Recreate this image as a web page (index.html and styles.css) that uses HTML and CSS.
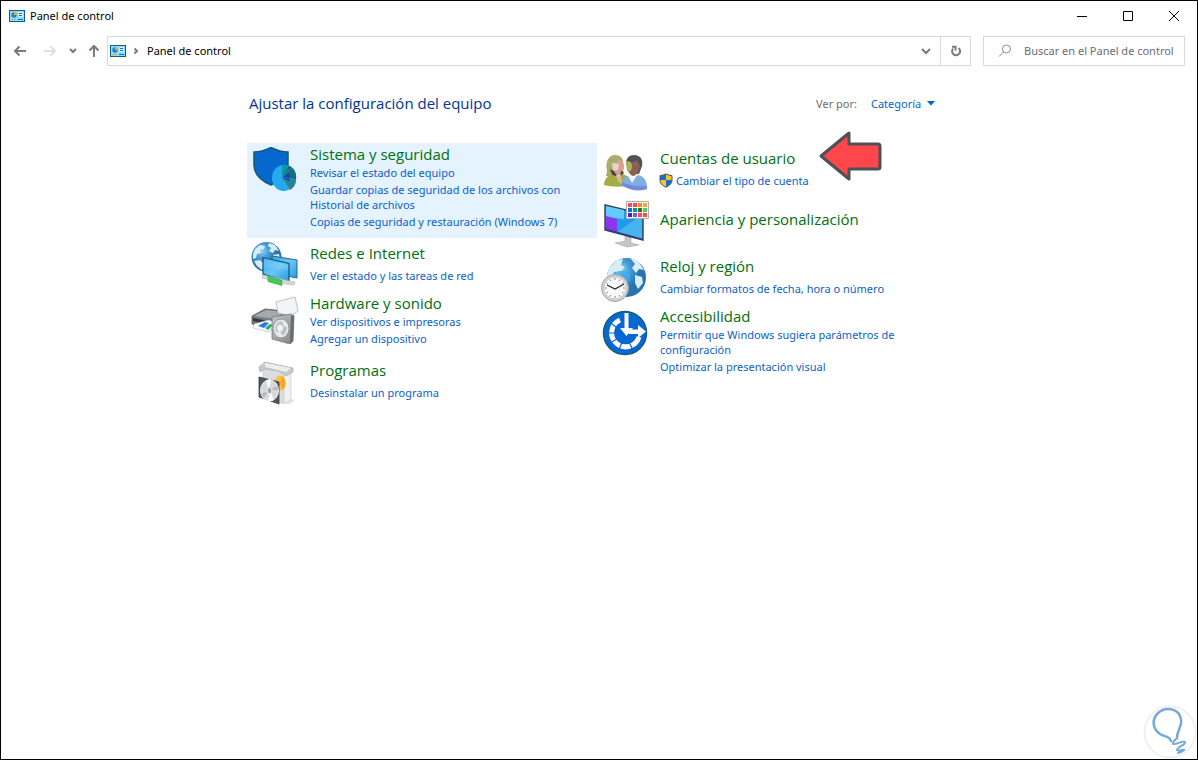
FILE: index.html
```html
<!DOCTYPE html>
<html lang="es">
<head>
<meta charset="utf-8">
<meta name="viewport" content="width=device-width, initial-scale=1">
<title>Panel de control</title>
<link rel="stylesheet" href="styles.css">
</head>
<body>
<svg class="defs" width="0" height="0" aria-hidden="true">
  <symbol id="panel" viewBox="0 0 16 12">
    <path fill="#0b6184" d="M0 0h16v12H0z"/><path fill="#8edcff" d="M1 1h14v10H1z"/>
    <circle cx="5" cy="5" r="2.700" fill="#1a83d4"/><path fill="#f5a623" d="M5 5V1.800A3 3 0 0 1 8 5z"/>
    <path fill="#dff5ff" d="M9.500 2h4.500v5H9.500z"/><path stroke="#0f70c4" d="M10 3.500h3M10 5.500h3"/>
    <path stroke="#f5a623" d="M2 9.500h5"/><path stroke="#0f70c4" d="M9 9.500h5"/>
  </symbol>
</svg>
<div class="window">
  <header class="titlebar">
    <svg class="panel-icon" aria-hidden="true"><use href="#panel"/></svg>
    <h1 class="window-title">Panel de control</h1>
    <button class="caption-button" aria-label="Minimizar"><svg width="12" height="12" viewBox="0 0 12 12"><path d="M1 6.500h10"/></svg></button>
    <button class="caption-button" aria-label="Maximizar"><svg width="12" height="12" viewBox="0 0 12 12"><path d="M1.500 1.500h9v9h-9z"/></svg></button>
    <button class="caption-button" aria-label="Cerrar"><svg width="12" height="12" viewBox="0 0 12 12"><path d="M1 1l10 10M11 1L1 11"/></svg></button>
  </header>

  <nav class="toolbar" aria-label="Navegación">
    <div class="history">
      <button class="nav-button" aria-label="Atrás"><svg width="14" height="12" viewBox="0 0 14 12"><path d="M13 6H2M6.500 1.500L2 6l4.500 4.500"/></svg></button>
      <button class="nav-button forward" aria-label="Adelante" disabled><svg width="14" height="12" viewBox="0 0 14 12"><path d="M1 6h11M7.500 1.500L12 6l-4.500 4.500"/></svg></button>
      <button class="nav-button recent" aria-label="Ubicaciones recientes"><svg width="8" height="6" viewBox="0 0 8 6"><path d="M1 1l3 3 3-3"/></svg></button>
      <button class="nav-button up" aria-label="Arriba"><svg width="12" height="14" viewBox="0 0 12 14"><path d="M6 13V2M1.500 6.500L6 2l4.500 4.500"/></svg></button>
    </div>
    <div class="address">
      <svg class="panel-icon" aria-hidden="true"><use href="#panel"/></svg>
      <svg class="crumb-arrow" width="6" height="8" viewBox="0 0 6 8" aria-hidden="true"><path d="M1.500 1.500L4 4 1.500 6.500"/></svg>
      <a class="crumb" href="#">Panel de control</a>
      <button class="address-button" aria-label="Ubicaciones anteriores"><svg width="10" height="8" viewBox="0 0 10 8"><path d="M1 2l4 4 4-4"/></svg></button>
      <button class="address-button refresh" aria-label="Actualizar"><svg width="12" height="12" viewBox="0 0 12 12"><path d="M8.500 3a4 4 0 1 1-5.500.7"/><path d="M2 1.800h3.500V5.500"/></svg></button>
    </div>
    <label class="search">
      <svg width="14" height="14" viewBox="0 0 14 14" aria-hidden="true"><circle cx="8.500" cy="5" r="4"/><path d="M5.500 8L1 12.500"/></svg>
      <input type="text" aria-label="Buscar" placeholder="Buscar en el Panel de control">
    </label>
  </nav>

  <main class="content">
    <div class="content-header">
      <h2 class="page-title">Ajustar la configuración del equipo</h2>
      <label class="view-label" for="view">Ver por:</label>
      <div class="view-picker">
        <select id="view" class="view-select"><option>Categoría</option></select>
        <svg class="view-arrow" width="8" height="5" viewBox="0 0 8 5" aria-hidden="true"><path d="M0 0h8L4 4.500z"/></svg>
      </div>
    </div>

    <div class="categories">
      <div class="column">
        <section class="category selected">
          <svg class="category-icon" viewBox="0 0 48 48" aria-hidden="true">
            <path d="M3 5c6 0 12-2 17-4.500C25 3 31 5 37 5v13c0 9-8 16-17 20C11 34 3 27 3 18z" fill="#0668cf" stroke="#155a74" stroke-width="1.500"/>
            <ellipse cx="32.500" cy="31" rx="11.500" ry="13" fill="#25a8f0"/>
            <path d="M31 30V18c8-1 14 4 14 11z" fill="#0799a8"/>
            <path d="M31 30l7-11c5 2 8 8 7 14z" fill="#176b83"/>
            <path d="M31 30l14 3c0 5-3 8-6 10z" fill="#24839a"/>
            <path d="M31 31l7-5 1 8z" fill="#0647b0"/>
            <path d="M31 30l10-9M31 30l14 3M31 30l8 13" stroke="#4c9db0" stroke-width=".6"/>
          </svg>
          <div class="category-text">
            <h3><a href="#">Sistema y seguridad</a></h3>
            <ul class="tasks">
              <li><a href="#">Revisar el estado del equipo</a></li>
              <li><a href="#">Guardar copias de seguridad de los archivos con Historial de archivos</a></li>
              <li><a href="#">Copias de seguridad y restauración (Windows 7)</a></li>
            </ul>
          </div>
        </section>

        <section class="category single">
          <svg class="category-icon" viewBox="0 0 48 48" aria-hidden="true">
            <defs>
              <radialGradient id="globe" cx=".35" cy=".3"><stop offset="0" stop-color="#8bd3f8"/><stop offset=".5" stop-color="#4299d4"/><stop offset="1" stop-color="#2a73ae"/></radialGradient>
              <linearGradient id="screen" x2="1" y2="1"><stop offset="0" stop-color="#32a9ef"/><stop offset=".5" stop-color="#6bc6f6"/><stop offset="1" stop-color="#249ae4"/></linearGradient>
            </defs>
            <circle cx="15.500" cy="15" r="15" fill="url(#globe)"/>
            <path d="M4 7l5-4 5 1-1 3-4 1 1 3-4 1-1 4-3 1v-5zM18 1l6 2 4 6-4-1-2 3-4-2 2-3-3-2zM3 19l6-1 4 4-2 6-5-4zM22 13l6-1 1 5-4 2z" fill="#d8ecf7"/>
            <path d="M21 14l25 4v18l-25-5z" fill="url(#screen)" stroke="#2b6486" stroke-width="1"/>
            <path d="M12 15.500l26 6V40l-26-8z" fill="url(#screen)" stroke="#1f546f" stroke-width="1.200"/>
            <path d="M13 17l24 6v5L13 25z" fill="#8ed6fb" opacity=".35"/>
            <path d="M11 33l6 1 22 5 5 1-1 3-8-1-24-6z" fill="#d5d8d9" stroke="#a4adaf" stroke-width=".5"/>
            <path d="M17 34.500l14 4v5l-14-4z" fill="#43cd50" stroke="#24a53b" stroke-width=".6"/>
          </svg>
          <div class="category-text">
            <h3><a href="#">Redes e Internet</a></h3>
            <ul class="tasks"><li><a href="#">Ver el estado y las tareas de red</a></li></ul>
          </div>
        </section>

        <section class="category">
          <svg class="category-icon" viewBox="0 0 48 48" aria-hidden="true">
            <defs><linearGradient id="metal" x2="1" y2="1"><stop offset="0" stop-color="#c5c7c9"/><stop offset="1" stop-color="#7f8488"/></linearGradient></defs>
            <path d="M1 20l13-7 20 2 8 4-4 9-22 6L1 28z" fill="#777b80" stroke="#55595e" stroke-width=".8"/>
            <path d="M3 20l12-6 18 2-9 7z" fill="#a4a9ae"/>
            <path d="M25 6l19-5 3 14-7 5-13-3z" fill="#f3f4f6" stroke="#aeb3b8" stroke-width=".8"/>
            <path d="M2 22l16 3 20-3v3l-20 4-16-4z" fill="#33383e"/>
            <path d="M3 28l14-4 9 2-8 10-16-4z" fill="#fafbfb" stroke="#a6adb1" stroke-width=".5"/>
            <path d="M7 30l7-4 4 1-5 5z" fill="#267ae2"/><path d="M14 32l5-4 3 1-5 5z" fill="#27af5d"/>
            <path d="M21 21l19-3 3 2-1 25-3 3-18-5z" fill="url(#metal)" stroke="#777b7f" stroke-width=".8"/>
            <path d="M40 20l3-1-1 26-3 3z" fill="#676c70"/>
            <ellipse cx="30" cy="32.500" rx="8" ry="9.500" fill="#e5e6e7" stroke="#969a9d"/>
            <ellipse cx="30" cy="32.500" rx="5.500" ry="7" fill="#bcbfc2"/><ellipse cx="29" cy="32" rx="3" ry="3.500" fill="#f2f2f2"/><path d="M31 24l2 7 4-2M24 37l5-2 3 6" fill="#f5f5f5" opacity=".8"/>
          </svg>
          <div class="category-text">
            <h3><a href="#">Hardware y sonido</a></h3>
            <ul class="tasks">
              <li><a href="#">Ver dispositivos e impresoras</a></li>
              <li><a href="#">Agregar un dispositivo</a></li>
            </ul>
          </div>
        </section>

        <section class="category single">
          <svg class="category-icon" viewBox="0 0 48 48" aria-hidden="true">
            <path d="M36 39l8 2-5 4-15-1z" fill="#d9d9d9" opacity=".7"/>
            <path d="M12 8l21 6v30l-21-5z" fill="#dcdddf" stroke="#c4c6c8" stroke-width=".6"/>
            <path d="M33 13l7-4v31l-7 5z" fill="#eff0f1" stroke="#c5c8ca" stroke-width=".6"/>
            <path d="M8 8l6-5 28 6v4l-7 4-7-5-14-2-5 3z" fill="#c8cacd" stroke="#aaadb0" stroke-width=".7"/>
            <path d="M14 4l26 5-5 4-21-5z" fill="#eeeeef"/>
            <ellipse cx="29" cy="24" rx="5.500" ry="7.500" fill="#fac33e"/><path d="M29 24l2-7c4 3 5 9 1 14z" fill="#f5a623"/>
            <path d="M8 18l20 5v22L8 38z" fill="#54585b" stroke="#33373a" stroke-width=".8"/>
            <ellipse cx="18.500" cy="31.500" rx="9" ry="10.500" fill="#d6d8da" stroke="#f3f3f3"/>
            <path d="M18 31l-3-10 5-1zM19 32l4 9-6 2z" fill="#fff"/><path d="M19 31l7-4 1 4zM17 32l-7 3 3 4z" fill="#b7babd"/>
            <ellipse cx="18.500" cy="31.500" rx="2.500" ry="3.200" fill="#a1a5a8" stroke="#f4f4f4"/>
          </svg>
          <div class="category-text">
            <h3><a href="#">Programas</a></h3>
            <ul class="tasks"><li><a href="#">Desinstalar un programa</a></li></ul>
          </div>
        </section>
      </div>

      <div class="column">
        <section class="category single">
          <svg class="category-icon" viewBox="0 0 48 48" aria-hidden="true">
            <path d="M6 24C4 14 8 8 14 8c6 0 9 4 8 10l-1 8-8 4-8-1z" fill="#a9ad68"/>
            <path d="M12 16c3 0 5-2 6-4 3 1 5 4 5 7 0 7-3 9-6 9-5 0-7-5-5-12z" fill="#d8a08d"/>
            <path d="M11 16l7 1-1 6-5 1z" fill="#e5d6c9"/><path d="M9 22l4 2 3 5-4 1zM20 24l3 1-2 4-2 1z" fill="#48454a"/>
            <path d="M3 38c0-6 4-10 9-10l5 2 5-3 6 3-1 9c-7 1-17 1-24-1z" fill="#a4ad45"/>
            <path d="M15 28l5 1 1 8-4-3z" fill="#e1b4a0"/>
            <path d="M25 17c0-6 3-9 8-9 7 0 9 5 8 11l-3 8-9-1z" fill="#525155"/>
            <path d="M26 16c5 0 8-1 10-3l3 6c-1 6-4 10-7 10-4-1-6-6-6-13z" fill="#8b6056"/>
            <path d="M25 15c3-2 6 0 6 4s-2 7-5 5z" fill="#a9b453"/>
            <path d="M21 38c0-6 4-9 7-9l4 3 5-4c6 1 9 6 9 13-6 3-18 2-25-3z" fill="#80aee0"/>
            <path d="M27 29l4 7 4-6z" fill="#f1f4f8"/><path d="M21 35c8 4 17 5 25 4v3c-9 3-19 1-25-4z" fill="#7389dc"/>
          </svg>
          <div class="category-text">
            <h3><a href="#">Cuentas de usuario</a></h3>
            <ul class="tasks"><li class="shielded">
              <svg width="14" height="15" viewBox="0 0 14 15" aria-hidden="true"><path d="M1 2.500Q4 2.500 7 1q3 1.500 6 1.500V7c0 3-2 5.500-6 7.200C3 12.500 1 10 1 7z" fill="#1470d4"/><path d="M7 1q3 1.500 6 1.500V7H7zM1 7h6v7.200C3 12.500 1 10 1 7z" fill="#ffc328"/><path d="M1 2.500Q4 2.500 7 1q3 1.500 6 1.500V7c0 3-2 5.500-6 7.200C3 12.500 1 10 1 7z" fill="none" stroke="#555"/></svg>
              <a href="#">Cambiar el tipo de cuenta</a>
            </li></ul>
          </div>
          <svg class="pointer" width="66" height="52" viewBox="0 0 66 52" aria-hidden="true"><path d="M3 26L31 3v11h29q2 0 2 2v21q0 2-2 2H31v10z" fill="#ff474b" stroke="#4d5054" stroke-width="3" stroke-linejoin="round"/></svg>
        </section>

        <section class="category title-only">
          <svg class="category-icon" viewBox="0 0 48 48" aria-hidden="true">
            <path d="M24 35l6 1v6l8 2-12 2-12-4 10-2z" fill="#c2c7c9" stroke="#9ba2a5" stroke-width=".5"/>
            <path d="M4 4l38 9v26L4 29z" fill="#229cea" stroke="#31404b" stroke-width="1.400"/>
            <path d="M5 5l18 4v9L5 16z" fill="#65caff"/><path d="M5 15l11 3v13L5 28z" fill="#8c36ef"/><path d="M16 31l25-17v24z" fill="#45b4ef"/>
            <path d="M5 28l36 10" stroke="#3b2f9d"/>
            <path d="M25.500.5h22v17h-22z" fill="#f8f8f8" stroke="#aaafb3"/>
            <path fill="#ff4b4f" d="M27 2h4v4h-4zM32 2h4v4h-4zM37 12h4v4h-4zM42 12h4v4h-4z"/>
            <path fill="#fa8c13" d="M37 2h4v4h-4z"/><path fill="#f9aa22" d="M42 2h4v4h-4z"/>
            <path fill="#1370c8" d="M27 7h4v4h-4z"/><path fill="#05949c" d="M32 7h4v4h-4z"/><path fill="#466c0b" d="M37 7h4v4h-4z"/><path fill="#4ecb64" d="M42 7h4v4h-4z"/>
            <path fill="#4b22a6" d="M27 12h4v4h-4z"/><path fill="#6c62e8" d="M32 12h4v4h-4z"/>
          </svg>
          <div class="category-text"><h3><a href="#">Apariencia y personalización</a></h3></div>
        </section>

        <section class="category single">
          <svg class="category-icon" viewBox="0 0 48 48" aria-hidden="true">
            <circle cx="25.500" cy="22.500" r="19.500" fill="url(#globe)"/>
            <path d="M8 13l8-8 6-1-2 6 4 2-4 4-7 1-2 6-6 1zM29 3l8 3 6 9-5-1-3 4-4-5 3-4zM34 20l7 2 1 6-5 6-3-6z" fill="#d9edf8"/>
            <path d="M17 16h12v10l-9 2z" fill="#3cadf0" opacity=".7"/>
            <circle cx="14" cy="33" r="13.500" fill="#d1d2d4" stroke="#a2a5a8"/><circle cx="14" cy="33" r="11" fill="#fafafa" stroke="#bfc2c4" stroke-width=".8"/>
            <path d="M14 23v2M14 41v2M4 33h2M22 33h2M9 24.500l1 1.500M19 24.500L18 26M5.500 28l1.500 1M22.500 28L21 29M5.500 38L7 37M22.500 38L21 37M9 41.500l1-1.500M19 41.500L18 40" stroke="#85898d"/>
            <path d="M6 30l8 4 9-5" stroke="#272a2e" stroke-width="1.300" fill="none"/>
          </svg>
          <div class="category-text">
            <h3><a href="#">Reloj y región</a></h3>
            <ul class="tasks"><li><a href="#">Cambiar formatos de fecha, hora o número</a></li></ul>
          </div>
        </section>

        <section class="category">
          <svg class="category-icon" viewBox="0 0 48 48" aria-hidden="true">
            <circle cx="24" cy="24" r="21.500" fill="#0868d2" stroke="#135d78" stroke-width="1.500"/>
            <path d="M19 11A14 14 0 1 0 38 28" fill="none" stroke="#fff" stroke-width="5"/>
            <path d="M10 14l6 5M6 24h8M9 34l7-4M18 41l3-8M32 41l-4-8" stroke="#0868d2" stroke-width="1.200"/>
            <path d="M23.500 4h4v15H32l-6.500 8-6.500-8h4.500z" fill="#fff"/>
            <path d="M28 20.500h9V16l8 6.500-8 6.500v-4H28z" fill="#fff"/>
          </svg>
          <div class="category-text">
            <h3><a href="#">Accesibilidad</a></h3>
            <ul class="tasks">
              <li><a href="#">Permitir que Windows sugiera parámetros de configuración</a></li>
              <li><a href="#">Optimizar la presentación visual</a></li>
            </ul>
          </div>
        </section>
      </div>
    </div>
  </main>
  <svg class="watermark" width="54" height="54" viewBox="0 0 54 54" aria-hidden="true"><circle cx="27" cy="27" r="25.500" fill="#fff" stroke="#e9edf5" stroke-width="1.500"/><path d="M28 36c-1-5-6-4-11-7C10 24 8 15 15 8c8-7 19-4 22 3 4 9-3 13-3 22" fill="none" stroke="#76a9d8" stroke-width="2.500" stroke-linecap="round"/><path d="M34 33c-3 3-5 5-4 6 2 1 11-4 12-2 1 3-8 5-8 8 1 2 5-1 7 0-1 1-3 2-6 3" fill="none" stroke="#76a9d8" stroke-width="2" stroke-linecap="round"/></svg>
</div>
</body>
</html>
```
FILE: styles.css
```css
* { box-sizing: border-box; }

body {
  margin: 0;
  font: 11px/15px "Noto Sans", "Open Sans", sans-serif;
  color: #000;
  background: #fff;
}

button, input, select { font: inherit; }

button {
  display: flex;
  align-items: center;
  justify-content: center;
  padding: 0;
  border: 0;
  background: none;
}

a { color: inherit; text-decoration: none; }
a:hover { text-decoration: underline; }
h1, h2, h3, ul { margin: 0; padding: 0; font-weight: 400; }
ul { list-style: none; }

.defs { position: absolute; }

.window {
  position: relative;
  min-height: 100vh;
  overflow: hidden;
  border: 1px solid #000;
}

.titlebar {
  display: flex;
  align-items: center;
  height: 30px;
  padding-left: 8px;
}

.panel-icon { flex: none; width: 16px; height: 12px; }

.window-title {
  flex: 1;
  padding: 0 0 2px 5px;
  font-size: 11px;
  line-height: 15px;
}

.caption-button { width: 46px; height: 30px; }
.caption-button svg { fill: none; stroke: #000; }

.toolbar {
  display: flex;
  gap: 12px;
  padding: 5px 12px 0;
}

.history {
  display: flex;
  align-items: center;
  margin-right: -6px;
}

.nav-button { width: 30px; height: 30px; justify-content: flex-start; }
.nav-button svg { fill: none; stroke: #777a80; stroke-width: 2; }
.nav-button.forward svg { stroke: #e0dede; }
.nav-button.recent { width: 18px; justify-content: flex-end; margin-left: -14px; }
.nav-button.up { width: 23px; justify-content: flex-end; margin-right: 1px; }

.address {
  flex: 1;
  display: flex;
  align-items: center;
  height: 30px;
  padding-left: 2px;
  border: 1px solid #d9d9d9;
}

.address button svg, .crumb-arrow {
  fill: none;
  stroke: #777a80;
  stroke-width: 2;
}

.crumb-arrow { margin: 0 8px 0 7px; }
.crumb { flex: 1; padding-bottom: 2px; }
.address-button { width: 29px; height: 28px; }
.address-button.refresh { width: 30px; border-left: 1px solid #d9d9d9; }

.search {
  display: flex;
  align-items: center;
  gap: 12px;
  width: 202px;
  height: 30px;
  padding-left: 14px;
  border: 1px solid #d9d9d9;
}

.search svg { flex: none; fill: none; stroke: #8b8b8b; }

.search input {
  flex: 1;
  min-width: 0;
  padding: 0 0 2px;
  border: 0;
  outline: 0;
  background: none;
}

.search input::placeholder { color: #6d6d6d; opacity: 1; }

.content {
  max-width: 704px;
  margin: 0 auto;
  padding: 25px 4px 40px 0;
}

.content-header {
  display: flex;
  align-items: center;
  height: 24px;
  padding: 0 12px 0 2px;
}

.page-title {
  flex: 1;
  font: 15px/20px "Open Sans", "Noto Sans", sans-serif;
  color: #003399;
}

.view-label { color: #6d6d6d; }
.view-picker { position: relative; margin-left: 14px; }

.view-select {
  appearance: none;
  display: block;
  padding: 0 13px 0 0;
  border: 0;
  background: none;
  color: #0066cc;
}

.view-arrow {
  position: absolute;
  top: 5px;
  right: 0;
  fill: #0066cc;
  pointer-events: none;
}

.categories {
  display: grid;
  grid-template-columns: 1fr 1fr;
  align-items: start;
  margin-top: 28px;
}

.category {
  position: relative;
  display: flex;
  gap: 11px;
  padding: 1px 16px 9px 4px;
}

.category.selected { background: #e5f3ff; }
.category.single { padding-top: 5px; padding-bottom: 9px; }
.category.title-only { padding-top: 12px; padding-bottom: 22px; }

.category-icon {
  flex: none;
  width: 48px;
  height: 48px;
  margin: 3px 0 -20px;
}

.single .category-icon { margin-top: -1px; }
.title-only .category-icon { margin-top: -8px; }
.category-text { flex: 1; min-width: 0; }

.category h3 {
  margin-bottom: 1px;
  font: 15px/20px "Open Sans", "Noto Sans", sans-serif;
  color: #00700f;
}

.single h3 { margin-bottom: 5px; }
.title-only h3 { margin-bottom: 0; }

.tasks {
  display: flex;
  flex-direction: column;
  gap: 2px;
  color: #0a5fcc;
}

.shielded { display: flex; gap: 3px; margin-left: -1px; }

.pointer {
  position: absolute;
  top: -13px;
  left: 221px;
}

.watermark {
  position: absolute;
  right: 0;
  bottom: 0;
}
```
